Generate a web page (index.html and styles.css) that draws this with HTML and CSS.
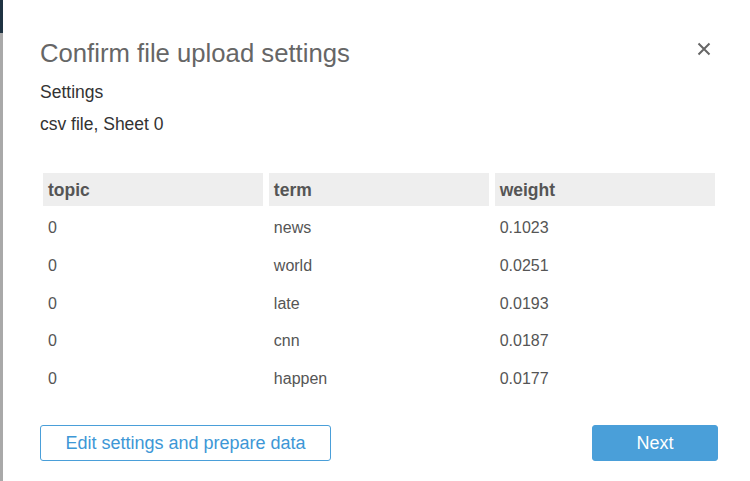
FILE: index.html
```html
<!DOCTYPE html>
<html>
<head>
<meta charset="utf-8">
<link rel="stylesheet" href="styles.css">
</head>
<body>
<div class="page">
  <div class="edge"><div class="edge-top"></div><div class="edge-rest"></div></div>
  <div class="dialog">
    <div class="head">
      <h1 class="title">Confirm file upload settings</h1>
      <button class="close" aria-label="Close">
        <svg width="14" height="14" viewBox="0 0 14 14"><path d="M1.5 1.5 L12.5 12.5 M12.5 1.5 L1.5 12.5" stroke="#666" stroke-width="2" fill="none"/></svg>
      </button>
    </div>
    <div class="label">Settings</div>
    <div class="sub">csv file, Sheet 0</div>
    <div class="table">
      <div class="th">topic</div><div class="th">term</div><div class="th">weight</div>
      <div class="td">0</div><div class="td">news</div><div class="td">0.1023</div>
      <div class="td">0</div><div class="td">world</div><div class="td">0.0251</div>
      <div class="td">0</div><div class="td">late</div><div class="td">0.0193</div>
      <div class="td">0</div><div class="td">cnn</div><div class="td">0.0187</div>
      <div class="td">0</div><div class="td">happen</div><div class="td">0.0177</div>
    </div>
    <div class="actions">
      <button class="btn btn-outline">Edit settings and prepare data</button>
      <button class="btn btn-primary">Next</button>
    </div>
  </div>
</div>
</body>
</html>
```
FILE: styles.css
```css
* { box-sizing: border-box; }
html, body { margin: 0; padding: 0; background: #fff; }
body { font-family: "Liberation Sans", Arial, sans-serif; }
.page { display: flex; width: 750px; height: 481px; overflow: hidden; }
.edge { width: 3px; display: flex; flex-direction: column; flex-shrink: 0; }
.edge-top { height: 33px; background: #1f3342; }
.edge-rest { flex: 1; background: #a9a9a9; }
.dialog { flex: 1; padding: 37px 32px 0 37px; display: flex; flex-direction: column; }
.head { display: flex; justify-content: space-between; align-items: flex-start; }
.title { margin: 0; font-size: 25.7px; line-height: 32px; font-weight: normal; color: #666; }
.close { border: 0; background: none; padding: 0; margin: 5px 7px 0 0; width: 14px; height: 14px; display: flex; }
.label { margin-top: 13px; font-size: 17.5px; line-height: 20px; color: #333; }
.sub { margin-top: 12px; font-size: 17.5px; line-height: 20px; color: #333; }
.table { margin: 39px 3px 0 3px; display: grid; grid-template-columns: 1fr 1fr 1fr; column-gap: 5.5px; row-gap: 5px; grid-template-rows: 33px; grid-auto-rows: 32.75px; }
.th { background: #eeeeee; font-weight: bold; font-size: 17.5px; line-height: 31px; padding-top: 2px; color: #555; padding-left: 5px; }
.td { font-size: 16px; line-height: 31.75px; padding-top: 1px; color: #555; padding-left: 5px; }
.actions { margin-top: 30px; display: flex; justify-content: space-between; }
.btn { height: 36px; font-family: "Liberation Sans", Arial, sans-serif; font-size: 18px; border-radius: 3px; padding: 2px 0 0 0; cursor: pointer; }
.btn-outline { width: 291px; background: #fff; border: 1px solid #4a9fd9; color: #3d97d6; }
.btn-primary { width: 126px; background: #4a9fd9; border: 1px solid #4a9fd9; color: #fff; }
```
